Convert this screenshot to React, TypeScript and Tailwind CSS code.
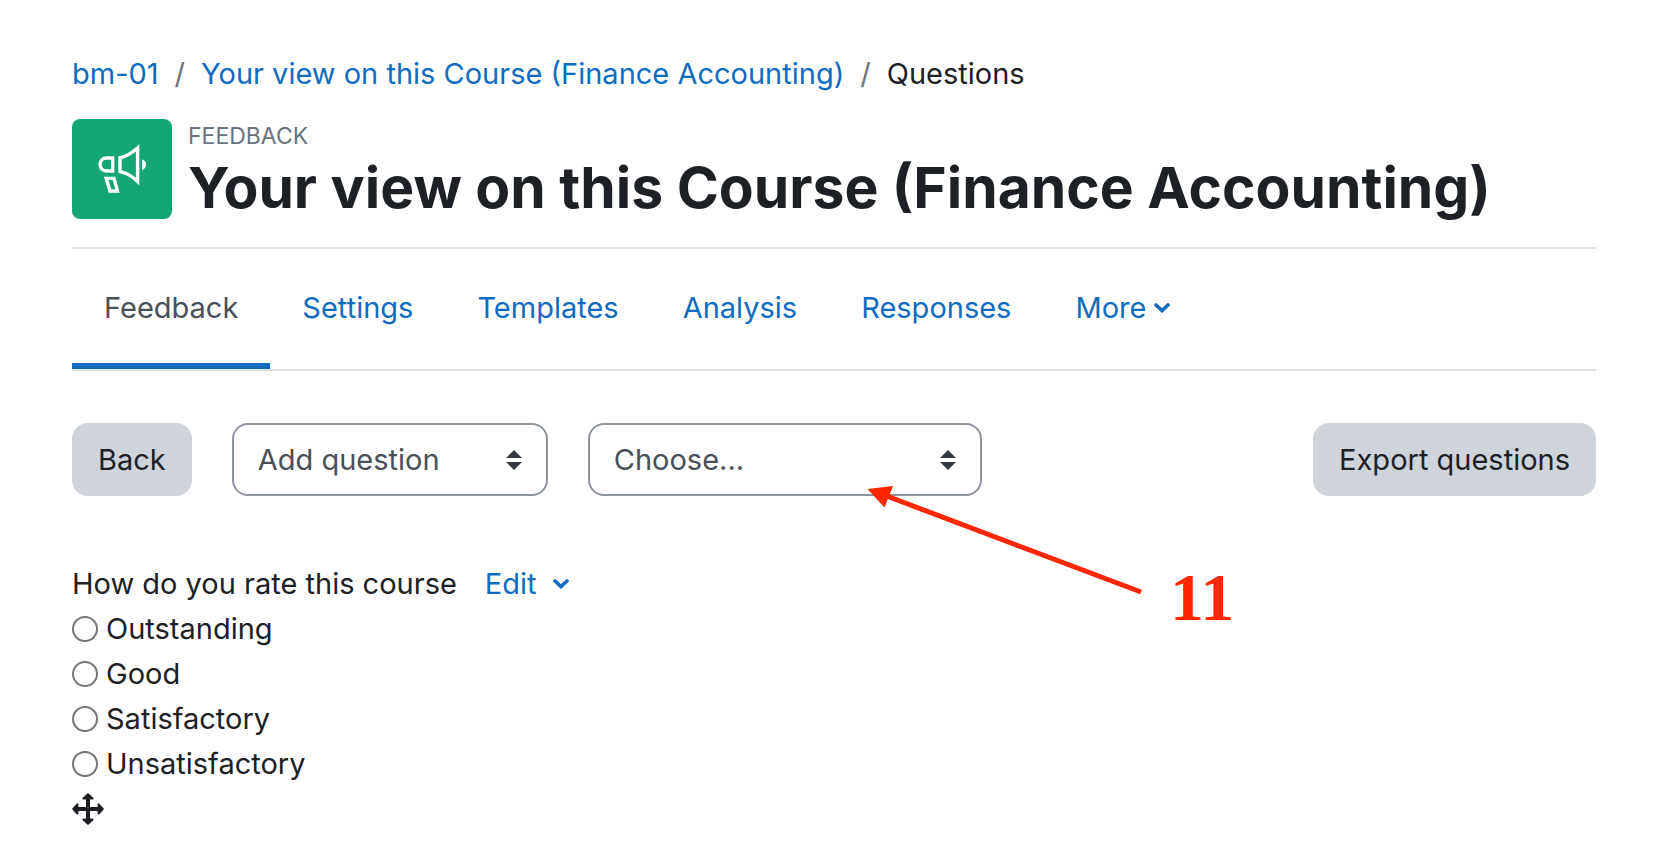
const COURSE = "Your view on this Course (Finance Accounting)";
const TABS = ["Settings", "Templates", "Analysis", "Responses"];
const ANSWERS = ["Outstanding", "Good", "Satisfactory", "Unsatisfactory"];

function Chevron() {
  return (
    <svg viewBox="0 0 16 10" className="h-[10px] w-4" fill="none" stroke="currentColor" strokeWidth="3.6" strokeLinecap="round" aria-hidden="true">
      <path d="M2 2 L8 7.6 L14 2" />
    </svg>
  );
}

function Megaphone() {
  return (
    <svg viewBox="0 0 48 48" className="size-12 overflow-visible" fill="none" stroke="white" strokeWidth="3.400" aria-hidden="true">
      <path d="M14.700 13 H8.500 A6.500 6.500 0 0 0 8.500 26 H14.700 Z" />
      <path d="M22 12.700 C29 11.500 35 7 39.600 3 V36.500 C35 32 29 27.800 22 26.600 Z" />
      <path d="M8.200 33.400 H16 L19.500 46 H12 Z" />
      <path d="M44 14.300 C49.500 16.500 49.500 23 44 25.200 Z" fill="white" stroke="none" />
    </svg>
  );
}

function MoveIcon() {
  return (
    <svg viewBox="0 0 32 32" className="size-8" fill="currentColor" stroke="currentColor" strokeWidth="2" strokeLinejoin="round" aria-hidden="true">
      <path d="M14 5h4v22h-4z M5 14h22v4h-22z" stroke="none" />
      <path d="M16 1.300 L20.600 5.400 H11.400 Z M16 30.700 L20.600 26.600 H11.400 Z M1.300 16 L5.400 11.400 V20.600 Z M30.700 16 L26.600 11.400 V20.600 Z" />
    </svg>
  );
}

function SelectBox({ label, option, width }: { label: string; option: string; width: string }) {
  return (
    <div className={`relative ${width}`}>
      <select
        aria-label={label}
        className="h-[73px] w-full appearance-none rounded-2xl border-2 border-[#8f959e] bg-white pr-16 pl-6 text-[#495057]"
      >
        <option>{option}</option>
      </select>
      <svg viewBox="0 0 4 5" className="pointer-events-none absolute top-[27px] right-[26px] h-5 w-4 fill-[#343a40]" aria-hidden="true">
        <path d="M2 0L0 2h4zm0 5L0 3h4z" />
      </svg>
    </div>
  );
}

export default function App() {
  return (
    <main className="min-h-screen bg-white pt-[51px] pr-[66px] pl-[72px] font-['Inter',sans-serif] text-[29px] leading-[45px] text-[#1d2125]">
      <nav aria-label="Breadcrumb">
        <ol className="flex">
          <li><a href="#course" className="text-[#0f6cbf]">bm-01</a></li>
          <li className="px-4 text-[#6a737b]" aria-hidden="true">/</li>
          <li><a href="#activity" className="text-[#0f6cbf]">{COURSE}</a></li>
          <li className="px-4 text-[#6a737b]" aria-hidden="true">/</li>
          <li>Questions</li>
        </ol>
      </nav>

      <header className="mt-[23px] flex items-start gap-4">
        <div className="flex size-[100px] shrink-0 items-center justify-center rounded-lg bg-[#15a676]">
          <Megaphone />
        </div>
        <div>
          <div className="text-[23px] leading-[34px] text-[#6a737b] uppercase">Feedback</div>
          <h1 className="text-[57px] leading-[70px] font-bold">{COURSE}</h1>
        </div>
      </header>

      <nav aria-label="Activity" className="mt-6 flex border-y-2 border-[#dee2e6]">
        <a href="#feedback" aria-current="page" className="border-b-[6px] border-[#0f6cbf] px-8 pt-9 pb-[33px] text-[#495057]">
          Feedback
        </a>
        {TABS.map((tab) => (
          <a key={tab} href={`#${tab.toLowerCase()}`} className="px-8 pt-9 text-[#0f6cbf]">{tab}</a>
        ))}
        <button type="button" className="mt-9 flex h-[45px] items-center gap-2 px-8 text-[#0f6cbf]">
          More <Chevron />
        </button>
      </nav>

      <div className="relative mt-[52px] flex gap-10">
        <button type="button" className="h-[73px] rounded-2xl bg-[#ced4da] px-[26px]">Back</button>
        <SelectBox label="Add question" option="Add question" width="w-[316px]" />
        <SelectBox label="Template" option="Choose..." width="w-[394px]" />
        <button type="button" className="ml-auto h-[73px] rounded-2xl bg-[#ced4da] px-[26px]">Export questions</button>
        <svg viewBox="0 0 276 110" className="pointer-events-none absolute top-[62px] left-[794px] h-[110px] w-[276px]" aria-hidden="true">
          <path d="M18 10 L275 107" stroke="#ff2600" strokeWidth="5" fill="none" />
          <path d="M1.500 4 L27 1 L18.500 22.500 Z" fill="#ff2600" />
        </svg>
        <span className="pointer-events-none absolute top-[134px] left-[1098px] font-['Liberation_Serif',serif] text-[68px] leading-[80px] font-bold text-[#ff2600]">11</span>
      </div>

      <fieldset className="mt-[65px]">
        <div className="flex items-center">
          <legend>How do you rate this course</legend>
          <button type="button" className="ml-7 flex items-center gap-4 text-[#0f6cbf]">
            Edit <Chevron />
          </button>
        </div>
        {ANSWERS.map((answer) => (
          <label key={answer} className="flex items-center gap-2">
            <input type="radio" name="rating" className="size-[26px] appearance-none rounded-full border-2 border-[#767676] bg-white" />
            {answer}
          </label>
        ))}
      </fieldset>
      <button type="button" aria-label="Move question" className="flex h-[45px] items-center">
        <MoveIcon />
      </button>
    </main>
  );
}
